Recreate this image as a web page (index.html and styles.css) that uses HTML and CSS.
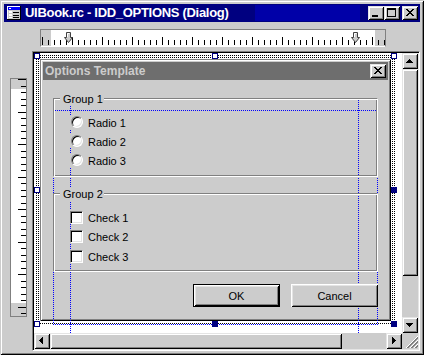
FILE: index.html
```html
<!DOCTYPE html>
<html lang="en">
<head>
<meta charset="utf-8">
<title>UIBook.rc - IDD_OPTIONS (Dialog)</title>
<link rel="stylesheet" href="styles.css">
</head>
<body>
<div class="window">
  <div class="titlebar">
    <svg class="app-icon" width="16" height="16" viewBox="0 0 16 16" shape-rendering="crispEdges">
      <rect x="1" y="1" width="14" height="14" fill="#000"/>
      <rect x="1" y="1" width="13" height="13" fill="#fff"/>
      <rect x="2" y="2" width="12" height="12" fill="#cccccc"/>
      <rect x="2" y="2" width="12" height="3" fill="#0000ff"/>
      <rect x="3" y="3" width="2" height="1" fill="#fff"/>
      <rect x="3" y="6" width="3" height="2" fill="#fff"/>
      <rect x="7" y="7" width="6" height="1" fill="#000"/>
      <rect x="3" y="9" width="3" height="2" fill="#fff"/>
      <rect x="7" y="10" width="6" height="1" fill="#000"/>
      <rect x="3" y="12" width="3" height="1" fill="#fff"/>
      <rect x="7" y="12" width="6" height="1" fill="#000"/>
    </svg>
    <span class="title">UIBook.rc - IDD_OPTIONS (Dialog)</span>
    <div class="caption-buttons">
      <span class="cbtn"><svg width="16" height="14" viewBox="0 0 16 14" shape-rendering="crispEdges"><path d="M4 9h6v2H4z"/></svg></span>
      <span class="cbtn"><svg width="16" height="14" viewBox="0 0 16 14" shape-rendering="crispEdges"><path d="M3 2h9v2H3zM3 4h1v7H3zM11 4h1v7h-1zM3 10h9v1H3z"/></svg></span>
      <span class="cbtn cbtn-close"><svg width="16" height="14" viewBox="0 0 16 14" shape-rendering="crispEdges"><path d="M4 3h2v1H4zM10 3h2v1h-2zM5 4h2v1H5zM9 4h2v1H9zM6 5h4v1H6zM7 6h2v1H7zM6 7h4v1H6zM5 8h2v1H5zM9 8h2v1H9zM4 9h2v1H4zM10 9h2v1h-2z"/></svg></span>
    </div>
  </div>

  <div class="client">
    <div class="corner"></div>

    <div class="hruler-cell">
      <div class="hruler">
        <svg class="marker marker-left" width="9" height="12" viewBox="0 0 9 12"><path d="M2.5 0.5H6.5V5.5H8.5L4.5 10.5L0.5 5.5H2.5Z" fill="#cccccc" stroke="#404040"/><path d="M3.5 5V1.5H5.5" fill="none" stroke="#fff"/></svg>
        <svg class="marker marker-right" width="9" height="12" viewBox="0 0 9 12"><path d="M2.5 0.5H6.5V5.5H8.5L4.5 10.5L0.5 5.5H2.5Z" fill="#cccccc" stroke="#404040"/><path d="M3.5 5V1.5H5.5" fill="none" stroke="#fff"/></svg>
      </div>
    </div>

    <div class="vruler-cell">
      <div class="vruler"></div>
    </div>

    <div class="view">
      <div class="canvas">
        <div class="selection">
          <div class="dialog">
            <div class="dlg-title">
              <span class="dlg-title-text">Options Template</span>
              <span class="cbtn cbtn-dlg"><svg width="16" height="14" viewBox="0 0 16 14" shape-rendering="crispEdges"><path d="M4 3h2v1H4zM10 3h2v1h-2zM5 4h2v1H5zM9 4h2v1H9zM6 5h4v1H6zM7 6h2v1H7zM6 7h4v1H6zM5 8h2v1H5zM9 8h2v1H9zM4 9h2v1H4zM10 9h2v1h-2z"/></svg></span>
            </div>
            <div class="dlg-client">
              <div class="guide guide-a"></div>
              <div class="guide guide-b"></div>
              <div class="margin-rect"></div>

              <div class="group group-1">
                <span class="group-label">Group 1</span>
                <div class="opt"><span class="radio"></span><span class="opt-label">Radio 1</span></div>
                <div class="opt"><span class="radio"></span><span class="opt-label">Radio 2</span></div>
                <div class="opt"><span class="radio"></span><span class="opt-label">Radio 3</span></div>
              </div>

              <div class="group group-2">
                <span class="group-label">Group 2</span>
                <div class="opt"><span class="check"></span><span class="opt-label">Check 1</span></div>
                <div class="opt"><span class="check"></span><span class="opt-label">Check 2</span></div>
                <div class="opt opt-last"><span class="check"></span><span class="opt-label">Check 3</span></div>
              </div>

              <div class="buttons">
                <span class="btn btn-default">OK</span>
                <span class="btn">Cancel</span>
              </div>
            </div>
          </div>
          <span class="handle h-tl"></span>
          <span class="handle h-tm"></span>
          <span class="handle h-tr"></span>
          <span class="handle h-ml"></span>
          <span class="handle handle-on h-mr"></span>
          <span class="handle h-bl"></span>
          <span class="handle handle-on h-bm"></span>
          <span class="handle handle-on h-br"></span>
        </div>
      </div>

      <div class="vscroll">
        <span class="sbtn"><svg width="16" height="16" viewBox="0 0 16 16" shape-rendering="crispEdges"><path d="M7 6h1v1H7zM6 7h3v1H6zM5 8h5v1H5zM4 9h7v1H4z"/></svg></span>
        <span class="thumb thumb-v"></span>
        <span class="track"></span>
        <span class="sbtn"><svg width="16" height="16" viewBox="0 0 16 16" shape-rendering="crispEdges"><path d="M4 6h7v1H4zM5 7h5v1H5zM6 8h3v1H6zM7 9h1v1H7z"/></svg></span>
      </div>

      <div class="hscroll">
        <span class="sbtn"><svg width="16" height="16" viewBox="0 0 16 16" shape-rendering="crispEdges"><path d="M5 7h1v1H5zM6 6h1v3H6zM7 5h1v5H7zM8 4h1v7H8z"/></svg></span>
        <span class="thumb thumb-h"></span>
        <span class="track"></span>
        <span class="sbtn"><svg width="16" height="16" viewBox="0 0 16 16" shape-rendering="crispEdges"><path d="M6 4h1v7H6zM7 5h1v5H7zM8 6h1v3H8zM9 7h1v1H9z"/></svg></span>
      </div>

      <div class="grip">
        <svg width="16" height="16" viewBox="0 0 16 16" shape-rendering="crispEdges">
          <path d="M3.5 15.5L15.5 3.5M7.5 15.5L15.5 7.5M11.5 15.5L15.5 11.5" stroke="#fff" fill="none"/>
          <path d="M4.5 15.5L15.5 4.5M5.5 15.5L15.5 5.5M8.5 15.5L15.5 8.5M9.5 15.5L15.5 9.5M12.5 15.5L15.5 12.5M13.5 15.5L15.5 13.5" stroke="#808080" fill="none"/>
        </svg>
      </div>
    </div>
  </div>
</div>
</body>
</html>
```

FILE: styles.css
```css
* { box-sizing: border-box; }

html, body {
  margin: 0;
  padding: 0;
}

body {
  width: 424px;
  height: 355px;
  overflow: hidden;
  background: #cccccc;
  font-family: "Liberation Sans", Arial, sans-serif;
  font-size: 11px;
  color: #000;
}

/* ---------- MDI child window ---------- */
.window {
  width: 424px;
  height: 355px;
  padding: 4px;
  background: #cccccc;
  box-shadow: inset 1px 1px #cccccc, inset -1px -1px #000,
              inset 2px 2px #fff, inset -2px -2px #808080;
  display: flex;
  flex-direction: column;
}

.titlebar {
  height: 18px;
  flex: none;
  display: flex;
  align-items: center;
  color: #fff;
  background: linear-gradient(#0000a8, #0000a8) 251px 1px / 105px 16px no-repeat, #000080;
}

.app-icon {
  flex: none;
  margin: 0 2px 0 2px;
}

.title {
  font-size: 13px;
  font-weight: bold;
  letter-spacing: -0.3px;
  line-height: 18px;
  white-space: nowrap;
  margin-left: 1px;
}

.caption-buttons {
  margin-left: auto;
  margin-right: 2px;
  display: flex;
}

.cbtn {
  display: block;
  width: 16px;
  height: 14px;
  background: #cccccc;
  box-shadow: inset 1px 1px #e4e4e4, inset -1px -1px #000,
              inset 2px 2px #fff, inset -2px -2px #808080;
}
.cbtn svg { display: block; }
.cbtn-close { margin-left: 2px; }

/* ---------- client area ---------- */
.client {
  display: grid;
  grid-template-columns: 28px 388px;
  grid-template-rows: 29px 300px;
}

.hruler {
  position: relative;
  margin: 7px 0 0 8px;
  width: 346px;
  height: 18px;
  border: 1px solid #808080;
  border-bottom-color: #fff;
  background:
    repeating-linear-gradient(90deg, #000 0 1px, transparent 1px 30px) 1px calc(100% - 1px) / 100% 8px no-repeat,
    repeating-linear-gradient(90deg, #000 0 1px, transparent 1px 6px) 1px calc(100% - 1px) / 100% 5px no-repeat,
    linear-gradient(90deg, #cccccc 0 10px, #fff 10px 334px, #cccccc 334px);
}

.marker {
  position: absolute;
  top: 2px;
  display: block;
}
.marker-left { left: 23px; }
.marker-right { left: 310px; }

/* vertical ruler: ticks on the right edge, 65px tile holding 10 ticks */
.vruler {
  margin: 27px 0 0 6px;
  width: 17px;
  height: 239px;
  border: 1px solid #808080;
  background:
    linear-gradient(#000 0 1px, transparent 1px) right 0 top 0 / 8px 65px repeat-y,
    linear-gradient(#000 0 1px, transparent 1px) right 0 top 33px / 8px 65px repeat-y,
    linear-gradient(#000 0 1px, transparent 1px) right 0 top 7px / 5px 65px repeat-y,
    linear-gradient(#000 0 1px, transparent 1px) right 0 top 13px / 5px 65px repeat-y,
    linear-gradient(#000 0 1px, transparent 1px) right 0 top 20px / 5px 65px repeat-y,
    linear-gradient(#000 0 1px, transparent 1px) right 0 top 26px / 5px 65px repeat-y,
    linear-gradient(#000 0 1px, transparent 1px) right 0 top 39px / 5px 65px repeat-y,
    linear-gradient(#000 0 1px, transparent 1px) right 0 top 46px / 5px 65px repeat-y,
    linear-gradient(#000 0 1px, transparent 1px) right 0 top 52px / 5px 65px repeat-y,
    linear-gradient(#000 0 1px, transparent 1px) right 0 top 59px / 5px 65px repeat-y,
    linear-gradient(#cccccc 0 10px, #fff 10px 224px, #cccccc 224px);
}

/* ---------- editor view ---------- */
.view {
  border: 1px solid;
  border-color: #808080 #fff #fff #808080;
  padding: 1px;
  box-shadow: inset 1px 1px #000, inset -1px -1px #e4e4e4;
  display: grid;
  grid-template-columns: 368px 16px;
  grid-template-rows: 280px 16px;
}

.canvas {
  background: #fff;
  overflow: hidden;
}

.selection {
  position: relative;
  width: 363px;
  height: 274px;
  border: 2px solid #fff;
  padding: 4px;
  background: conic-gradient(from 90deg at 1px 1px, #fff 0deg 180deg, #000 180deg 270deg, #fff 270deg) 0 0 / 2px 2px;
}

.handle {
  position: absolute;
  width: 6px;
  height: 6px;
  border: 1px solid #000080;
  background: #fff;
}
.handle-on { background: #000080; }
.h-tl { left: -2px; top: -2px; }
.h-tm { left: 176px; top: -2px; }
.h-tr { left: 355px; top: -2px; }
.h-ml { left: -2px; top: 132px; }
.h-mr { left: 355px; top: 132px; }
.h-bl { left: -2px; top: 266px; }
.h-bm { left: 176px; top: 266px; }
.h-br { left: 355px; top: 266px; }

/* ---------- dialog being edited ---------- */
.dialog {
  width: 351px;
  height: 262px;
  padding: 3px;
  background: #cccccc;
  box-shadow: 0 0 0 1px #fff,
              inset 1px 1px #808080, inset -1px -1px #000,
              inset 2px 2px #fff, inset -2px -2px #808080;
}

.dlg-title {
  height: 18px;
  display: flex;
  align-items: center;
  padding-left: 2px;
  background: #6e6e6e;
  color: #cccccc;
}
.dlg-title-text {
  font-size: 12px;
  font-weight: bold;
  line-height: 18px;
  white-space: nowrap;
}
.cbtn-dlg {
  margin-left: auto;
  margin-right: 2px;
}

.dlg-client {
  position: relative;
  height: 238px;
  padding: 0 10px;
}

.guide {
  position: absolute;
  top: 0;
  bottom: 0;
  width: 1px;
  background: repeating-linear-gradient(#0000ff 0 1px, transparent 1px 2px);
}
.guide-a { left: 27px; }
.guide-b { left: 315px; }

.margin-rect {
  position: absolute;
  left: 10px;
  top: 12px;
  width: 325px;
  height: 215px;
  background:
    repeating-linear-gradient(90deg, #0000ff 0 1px, transparent 1px 2px) left top / 100% 1px no-repeat,
    repeating-linear-gradient(90deg, #0000ff 0 1px, transparent 1px 2px) left bottom / 100% 1px no-repeat,
    repeating-linear-gradient(#0000ff 0 1px, transparent 1px 2px) left top / 1px 100% no-repeat,
    repeating-linear-gradient(#0000ff 0 1px, transparent 1px 2px) right top / 1px 100% no-repeat;
}

.group {
  position: relative;
  z-index: 1;
  height: 79px;
  padding: 16px 0 0 16px;
  border: 1px solid;
  border-color: #808080 #fff #fff #808080;
  box-shadow: inset 1px 1px #fff, inset -1px -1px #808080;
}
.group-1 { margin-top: 18px; }
.group-2 { margin-top: 16px; }

.group-label {
  position: absolute;
  top: -7px;
  left: 6px;
  padding: 0 1px 0 3px;
  line-height: 14px;
  background: #cccccc;
  white-space: nowrap;
}

.opt {
  display: flex;
  align-items: flex-start;
  width: fit-content;
  height: 14px;
  background: #cccccc;
}
.opt + .opt { margin-top: 5px; }
.opt.opt-last { margin-top: 6px; }

.radio {
  flex: none;
  width: 12px;
  height: 12px;
  margin: 1px 0 0 1px;
  border-radius: 50%;
  border: 1px solid;
  border-color: #808080 #fff #fff #808080;
  background: #fff;
  box-shadow: inset 1px 1px #000, inset -1px -1px #e4e4e4;
}

.check {
  flex: none;
  width: 13px;
  height: 13px;
  margin-top: 1px;
  border: 1px solid;
  border-color: #808080 #fff #fff #808080;
  background: #fff;
  box-shadow: inset 1px 1px #000, inset -1px -1px #e4e4e4;
}

.opt-label {
  margin-left: 5px;
  padding: 1px 2px 0 0;
  line-height: 14px;
  white-space: nowrap;
}

.buttons {
  position: relative;
  z-index: 1;
  display: flex;
  justify-content: flex-end;
  gap: 11px;
  margin-top: 12px;
}

.btn {
  width: 87px;
  height: 23px;
  display: flex;
  align-items: center;
  justify-content: center;
  background: #cccccc;
  box-shadow: inset 1px 1px #fff, inset -1px -1px #000,
              inset 2px 2px #e4e4e4, inset -2px -2px #808080;
}
.btn-default {
  border: 1px solid #000;
}

/* ---------- scrollbars ---------- */
.vscroll {
  display: flex;
  flex-direction: column;
  background: #cccccc;
}
.hscroll {
  display: flex;
  background: #cccccc;
}

.sbtn, .thumb {
  flex: none;
  display: block;
  background: #cccccc;
  box-shadow: inset 1px 1px #e4e4e4, inset -1px -1px #000,
              inset 2px 2px #fff, inset -2px -2px #808080;
}
.sbtn { width: 16px; height: 16px; }
.sbtn svg { display: block; }
.thumb-v { width: 16px; height: 207px; }
.thumb-h { width: 292px; height: 16px; }
.track { flex: 1; }

.grip {
  background: #cccccc;
}
.grip svg { display: block; }
```
